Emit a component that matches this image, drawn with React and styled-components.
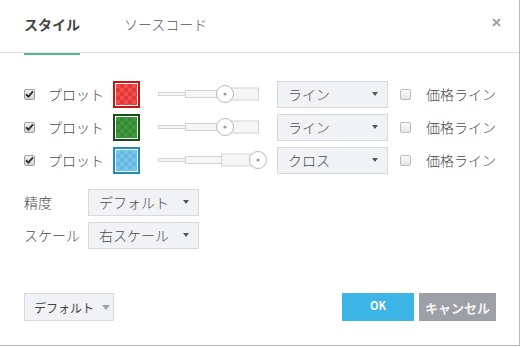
import styled, { createGlobalStyle } from "styled-components"

const GlobalStyle = createGlobalStyle`
    body {
        margin: 0;
        background: #ffffff;
        font-family: "Noto Sans CJK JP", "Noto Sans", sans-serif;
    }
`

const Dialog = styled.div`
    width: 519px;
    height: 345px;
    border-right: 1px solid #b9b9b9;
    border-bottom: 1px solid #b9b9b9;
    background: #fff;
    display: flex;
    flex-direction: column;
    color: #4a4a4a;
`

const Header = styled.div`
    display: flex;
    align-items: stretch;
    height: 52px;
    padding-left: 24px;
    border-bottom: 1px solid #dfe2e6;
`

const Tab = styled.div`
    display: flex;
    align-items: center;
    padding-bottom: 5px;
    margin-right: 44px;
    margin-bottom: -1px;
    font-size: 14px;
    font-weight: ${p => (p.active ? "bold" : "300")};
    color: ${p => (p.active ? "#444" : "#555")};
    border-bottom: 2px solid ${p => (p.active ? "#55b889" : "transparent")};
    box-sizing: border-box;
    height: 55px;
`

const Close = styled.div`
    margin-left: auto;
    width: 46px;
    display: flex;
    align-items: center;
    justify-content: center;
    padding-bottom: 7px;
`

const Body = styled.div`
    padding: 27px 0 0 24px;
    display: flex;
    flex-direction: column;
    gap: 5px;
`

const Row = styled.div`
    display: flex;
    align-items: center;
    height: 28px;
    margin-top: ${p => p.gapTop || 0}px;
`

const Box = styled.span`
    width: 11px;
    height: 11px;
    box-sizing: border-box;
    border: 1px solid ${p => (p.checked ? "#9d9d9d" : "#bdbdbd")};
    border-radius: 2px;
    background: ${p => (p.checked ? "linear-gradient(#f2f2f2, #d6d6d6)" : "linear-gradient(#fafafa, #e6e6e6)")};
    display: flex;
    align-items: center;
    justify-content: center;
    margin-left: ${p => p.offset || 0}px;
    flex-shrink: 0;
`

const Label = styled.span`
    font-size: 14px;
    font-weight: 300;
    margin-left: ${p => p.offset || 0}px;
    width: ${p => (p.w ? p.w + "px" : "auto")};
    white-space: nowrap;
`

const Swatch = styled.span`
    width: 27px;
    height: 27px;
    box-sizing: border-box;
    margin-left: 9px;
    border: 2px solid ${p => p.edge};
    box-shadow: inset 0 0 0 1px #fff;
    background-color: ${p => p.fill};
    background-image: repeating-conic-gradient(${p => p.alt} 0% 25%, transparent 0% 50%);
    background-size: 8px 8px;
    background-position: 1px 1px;
`

const SliderWrap = styled.svg`
    margin-left: 18px;
    flex-shrink: 0;
`

const Select = styled.div`
    width: 111px;
    height: 27px;
    box-sizing: border-box;
    margin-left: ${p => p.offset || 0}px;
    background: #f1f2f5;
    border: 1px solid #d6d9de;
    display: flex;
    align-items: center;
    padding: 0 9px 0 10px;
    font-size: 14px;
    font-weight: 300;
    color: #4a4a4a;
    &::after {
        content: "";
        margin-left: auto;
        border-left: 3px solid transparent;
        border-right: 3px solid transparent;
        border-top: 4px solid #555;
    }
`

const Footer = styled.div`
    margin-top: auto;
    display: flex;
    align-items: center;
    padding: 0 23px 24px 24px;
`

const PresetButton = styled.div`
    width: 90px;
    height: 28px;
    box-sizing: border-box;
    background: #f1f2f5;
    border: 1px solid #d6d9de;
    display: flex;
    align-items: center;
    padding-left: 9px;
    font-size: 12px;
    color: #444;
    &::after {
        content: "";
        margin-left: 8px;
        border-left: 4px solid transparent;
        border-right: 4px solid transparent;
        border-top: 5px solid #a3a3a3;
    }
`

const ActionButton = styled.div`
    height: 28px;
    width: ${p => p.w}px;
    margin-left: ${p => p.offset || 0}px;
    background: ${p => p.bg};
    color: ${p => p.fg || "#fff"};
    font-weight: bold;
    font-size: ${p => p.fs}px;
    display: flex;
    align-items: center;
    justify-content: center;
    padding-bottom: ${p => p.lift || 0}px;
    box-sizing: border-box;
`

const Check = () => (
    <svg width="9" height="8" viewBox="0 0 9 8">
        <path d="M1 4.2 L3.4 6.6 L8 1.4" stroke="#333" strokeWidth="2" fill="none" />
    </svg>
)

const Checkbox = ({ checked, offset }) => (
    <Box checked={checked} offset={offset}>{checked && <Check />}</Box>
)

const Slider = ({ value }) => (
    <SliderWrap width="110" height="20" viewBox="0 0 110 20">
        <rect x="0.5" y="8.5" width="27" height="3" fill="#f6f6f6" stroke="#d3d3d3" />
        <rect x="27.5" y="6.5" width="36" height="7" fill="#f6f6f6" stroke="#d3d3d3" />
        <rect x="63.5" y="4" width="37" height="12" fill="#f6f6f6" stroke="#d3d3d3" />
        <circle cx={value} cy="10" r="8.5" fill="#fff" stroke="#b7bbc3" />
        <circle cx={value} cy="10" r="1.6" fill="#9a9ea6" />
    </SliderWrap>
)

const plots = [
    { fill: "#f04c4c", alt: "#e23838", edge: "#c21414", thumb: 67, type: "ライン" },
    { fill: "#3f9a3f", alt: "#358a35", edge: "#174d17", thumb: 67, type: "ライン" },
    { fill: "#7ac6ea", alt: "#65b9e2", edge: "#1e8cc0", thumb: 100, type: "クロス" },
]

const PlotRow = ({ plot }) => (
    <Row>
        <Checkbox checked />
        <Label offset={13} w={56}>プロット</Label>
        <Swatch fill={plot.fill} alt={plot.alt} edge={plot.edge} />
        <Slider value={plot.thumb} />
        <Select offset={9}>{plot.type}</Select>
        <Checkbox offset={12} />
        <Label offset={15}>価格ライン</Label>
    </Row>
)

export default function App() {
    return (
        <>
            <GlobalStyle />
            <Dialog>
                <Header>
                    <Tab active>スタイル</Tab>
                    <Tab>ソースコード</Tab>
                    <Close>
                        <svg width="9" height="9" viewBox="0 0 9 9">
                            <path d="M1 1 L8 8 M8 1 L1 8" stroke="#a0a0a0" strokeWidth="1.8" />
                        </svg>
                    </Close>
                </Header>
                <Body>
                    {plots.map((p, i) => (
                        <PlotRow key={i} plot={p} />
                    ))}
                    <Row gapTop={9}>
                        <Label w={64}>精度</Label>
                        <Select>デフォルト</Select>
                    </Row>
                    <Row>
                        <Label w={64}>スケール</Label>
                        <Select>右スケール</Select>
                    </Row>
                </Body>
                <Footer>
                    <PresetButton>デフォルト</PresetButton>
                    <ActionButton w={72} bg="#3cb4e5" fs={11} lift={4} style={{ marginLeft: "auto" }}>OK</ActionButton>
                    <ActionButton w={77} bg="#9c9fa6" fg="#f4f4f4" fs={13} offset={5}>キャンセル</ActionButton>
                </Footer>
            </Dialog>
        </>
    )
}
